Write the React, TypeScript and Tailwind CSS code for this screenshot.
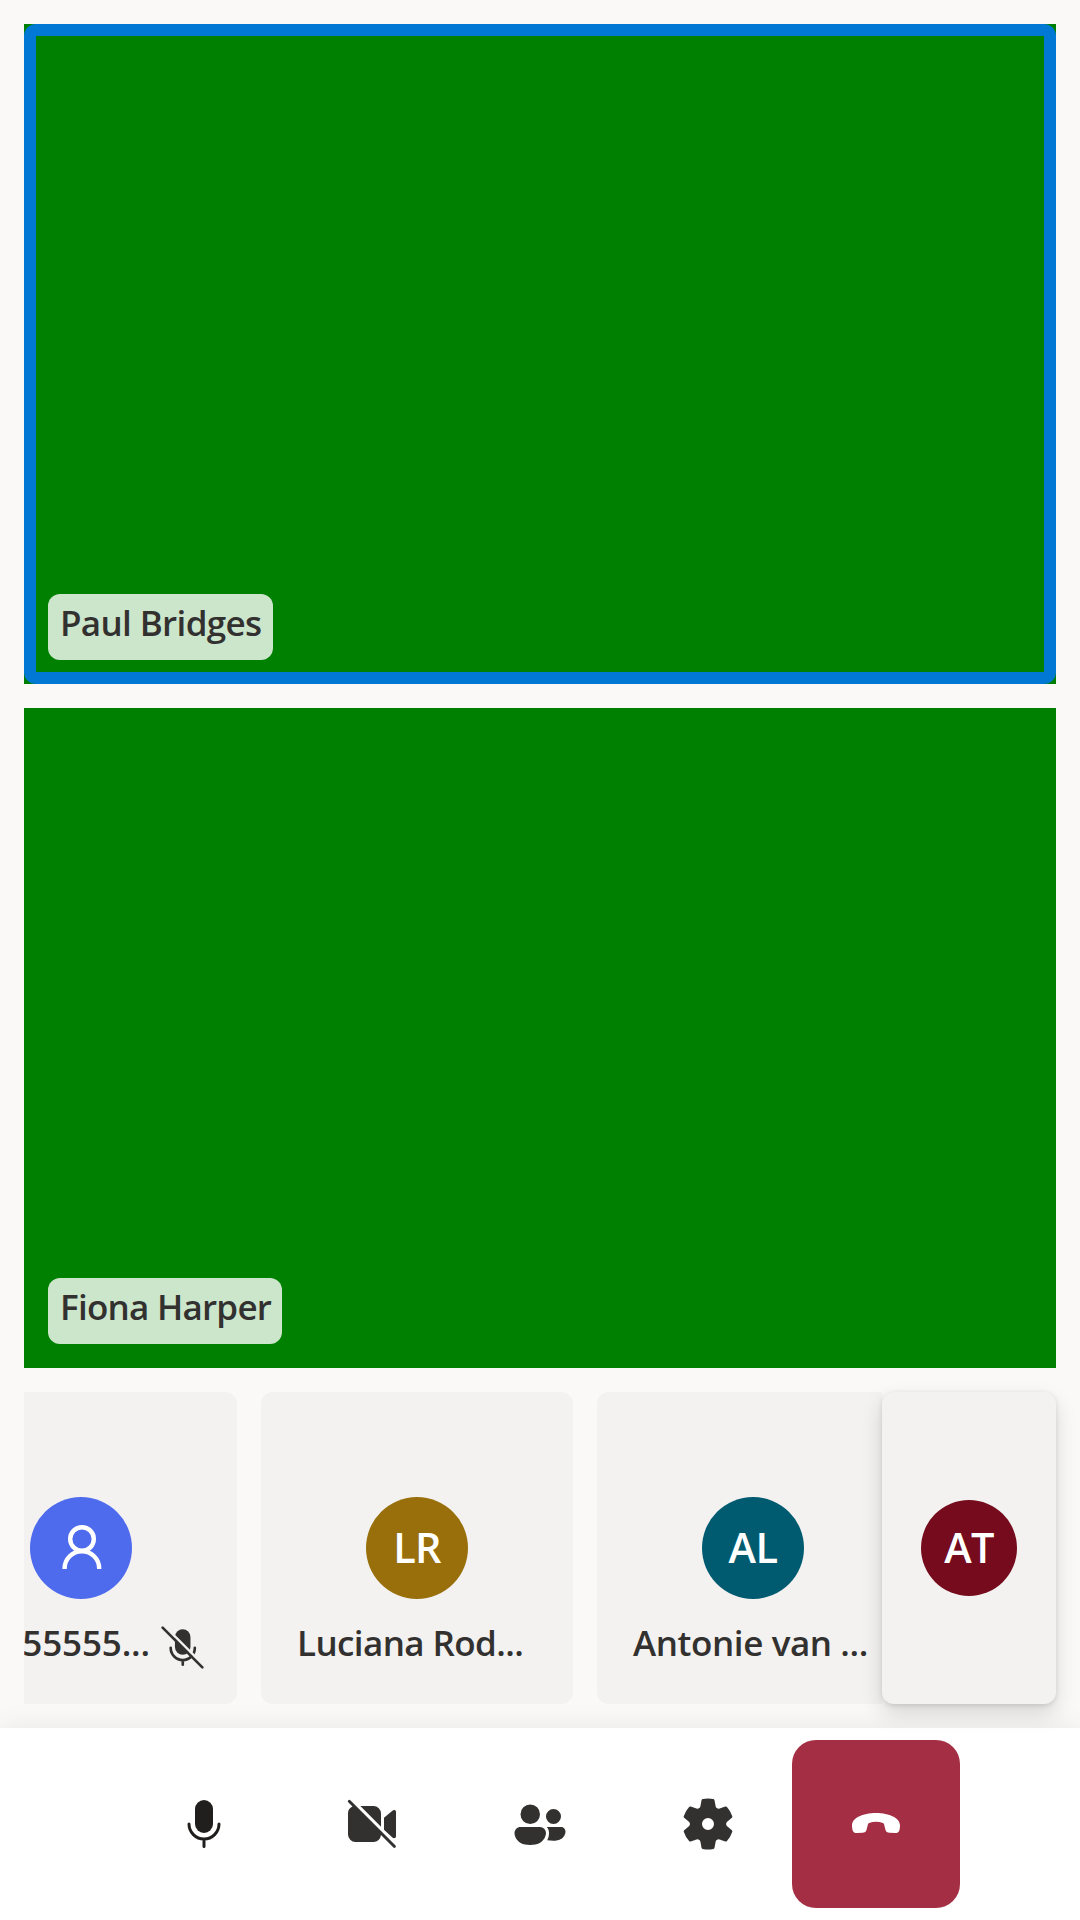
import React from 'react';

function MicIcon() {
  return (
    <svg className="size-[60px]" viewBox="0 0 20 20" fill="none" stroke="#201f1e" strokeLinecap="round">
      <rect x="7" y="2" width="6" height="11" rx="3" fill="#201f1e" stroke="none" />
      <path d="M5 10a5 5 0 0 0 10 0M10 15v2.5" />
    </svg>
  );
}

function VideoOffIcon() {
  return (
    <svg className="size-[60px]" viewBox="0 0 20 20" fill="#323130">
      <path d="M2.85 2.15a.5.5 0 1 0-.7.7L3.5 4.2A2.5 2.5 0 0 0 2 6.5v7A2.5 2.5 0 0 0 4.5 16h6a2.5 2.5 0 0 0 2.49-2.3l4.16 4.15a.5.5 0 0 0 .7-.7l-15-15ZM13 10.88 6.12 4h4.38A2.5 2.5 0 0 1 13 6.5v4.38ZM14 7.95v3.93l2.8 2.6c.45.4 1.2.3 1.2-.4V6c0-.75-.75-.8-1.2-.4L14 7.95Z" />
    </svg>
  );
}

function PeopleIcon() {
  return (
    <svg className="size-[60px]" viewBox="0 0 20 20" fill="#323130">
      <path d="M6.75 10a3.25 3.25 0 1 0 0-6.5 3.25 3.25 0 0 0 0 6.5ZM17 7.5a2.5 2.5 0 1 1-5 0 2.5 2.5 0 0 1 5 0ZM3.5 11c-1.1 0-2 .9-2 2 0 0 0 4 5.25 4S12 13 12 13a2 2 0 0 0-2-2H3.5ZM13 13c0 .9-.17 1.7-.6 2.4.6.1 1.3.15 2.1.15 4 0 4-3 4-3 0-.85-.7-1.55-1.5-1.55h-4.75c.5.55.75 1.2.75 2Z" />
    </svg>
  );
}

function SettingsIcon() {
  return (
    <svg className="size-[60px]" viewBox="0 0 20 20" fill="#323130">
      <path d="M1.91 7.38A8.5 8.5 0 0 1 3.7 4.3a.5.5 0 0 1 .54-.13l1.92.68a1 1 0 0 0 1.32-.76l.36-2a.5.5 0 0 1 .4-.4 8.53 8.53 0 0 1 3.55 0c.2.04.35.2.38.4l.37 2a1 1 0 0 0 1.32.76l1.92-.68a.5.5 0 0 1 .54.13 8.5 8.5 0 0 1 1.78 3.08c.06.2 0 .4-.15.54l-1.56 1.32a1 1 0 0 0 0 1.52l1.56 1.32a.5.5 0 0 1 .15.54 8.5 8.5 0 0 1-1.78 3.08.5.5 0 0 1-.54.13l-1.92-.68a1 1 0 0 0-1.32.76l-.37 2a.5.5 0 0 1-.38.4 8.53 8.53 0 0 1-3.56 0 .5.5 0 0 1-.39-.4l-.36-2a1 1 0 0 0-1.32-.76l-1.92.68a.5.5 0 0 1-.54-.13 8.5 8.5 0 0 1-1.78-3.08.5.5 0 0 1 .15-.54l1.56-1.32a1 1 0 0 0 0-1.52L2.06 7.92a.5.5 0 0 1-.15-.54ZM8 10a2 2 0 1 0 4 0 2 2 0 0 0-4 0Z" />
    </svg>
  );
}

function HangUpIcon() {
  return (
    <svg className="size-[60px]" viewBox="0 0 20 20" fill="#ffffff">
      <path d="M10 6.33c4.5 0 8 1.7 8 4.1 0 .5-.03.95-.15 1.45-.18.8-.7 1.2-1.5 1.15l-1.85-.12c-.75-.05-1.2-.4-1.37-1.1l-.45-1.75c-.05-.22-.15-.35-.38-.42a7.3 7.3 0 0 0-4.6 0c-.23.07-.33.2-.38.42l-.45 1.75c-.17.7-.62 1.05-1.37 1.1l-1.85.12c-.8.05-1.32-.35-1.5-1.15A6 6 0 0 1 2 10.43c0-2.4 3.5-4.1 8-4.1Z" />
    </svg>
  );
}

function MicOffIcon() {
  return (
    <svg className="size-[53px] shrink-0" viewBox="0 0 20 20" fill="none" stroke="#323130" strokeLinecap="round">
      <mask id="slash-gap" maskUnits="userSpaceOnUse" x="0" y="0" width="20" height="20">
        <rect width="20" height="20" fill="#fff" stroke="none" />
        <path d="m1.65.35 18 18" stroke="#000" strokeWidth="0.95" />
      </mask>
      <g mask="url(#slash-gap)">
        <rect x="7.15" y="3.1" width="5.85" height="9.6" rx="2.92" fill="#323130" stroke="none" />
        <path d="M5.55 10.1v.1a4.55 4.55 0 0 0 9.1 0v-.1M10.1 15v1.5" />
      </g>
      <path d="m2.5 2.5 15 15" />
    </svg>
  );
}

function PersonIcon() {
  return (
    <svg className="size-full" viewBox="0 0 102 102" fill="none" stroke="#fff" strokeWidth="4.4">
      <circle cx="52" cy="42" r="11.8" />
      <path d="M34.6 72v-.5a17.3 17.3 0 0 1 34.6 0v.5" />
    </svg>
  );
}

function VideoTile({ name, nameClass, speaking = false }: { name: string; nameClass: string; speaking?: boolean }) {
  return (
    <section className="relative flex h-[660px] items-end bg-[#008000] p-6">
      {speaking && <div className="absolute inset-0 rounded-[12px] border-[12px] border-[#0078d4]" />}
      <div className={`relative h-[66px] rounded-[12px] bg-white/80 px-3 text-[35px] leading-[57px] font-semibold whitespace-nowrap ${nameClass}`}>
        {name}
      </div>
    </section>
  );
}

function ParticipantTile({ avatarClass, avatar, children }: { avatarClass: string; avatar: React.ReactNode; children: React.ReactNode }) {
  return (
    <div className="flex h-[312px] w-[312px] shrink-0 flex-col items-center rounded-[12px] bg-[#f3f2f1] pt-[105px]">
      <div className={`flex size-[102px] items-center justify-center rounded-full text-[41.5px] leading-[60px] font-semibold text-white ${avatarClass}`}>
        {avatar}
      </div>
      <div className="mt-[18px] flex h-[52px] w-full items-center pl-9 text-[35px] leading-[52px] font-semibold whitespace-nowrap">
        {children}
      </div>
    </div>
  );
}

function ControlButton({ label, className = '', children }: { label: string; className?: string; children: React.ReactNode }) {
  return (
    <button aria-label={label} className={`flex size-[168px] items-center justify-center ${className}`}>
      {children}
    </button>
  );
}

export default function App() {
  return (
    <div className="flex h-[1920px] w-[1080px] flex-col overflow-hidden bg-[#faf9f8] font-['Open_Sans',sans-serif] text-[#323130]">
      <main className="flex flex-col gap-6 p-6">
        <VideoTile name="Paul Bridges" nameClass="w-[225px] tracking-[-0.65px]" speaking />
        <VideoTile name="Fiona Harper" nameClass="w-[234px] tracking-[-0.75px]" />
        <div className="flex h-[312px]">
          <div className="flex w-[858px] justify-end overflow-hidden">
            <div className="mr-[-27px] flex shrink-0 gap-6">
              <ParticipantTile avatarClass="bg-[#4f6bed]" avatar={<PersonIcon />}>
                <span className="flex w-[189px] shrink-0 justify-end tracking-[-0.15px]">15555555...</span>
                <span className="ml-[6px] flex pt-[8px]">
                  <MicOffIcon />
                </span>
              </ParticipantTile>
              <ParticipantTile avatarClass="bg-[#986f0b]" avatar={<span className="pb-[2px] tracking-[-0.9px]">LR</span>}>
                <span className="tracking-[-0.6px]">Luciana Rod...</span>
              </ParticipantTile>
              <ParticipantTile avatarClass="bg-[#005b70]" avatar={<span className="pb-[2px] tracking-[-0.6px]">AL</span>}>
                <span className="tracking-[-0.4px]">Antonie van ...</span>
              </ParticipantTile>
            </div>
          </div>
          <div className="relative z-10 flex w-[174px] items-center justify-center rounded-[12px] bg-[#f3f2f1] shadow-[0_9.6px_21.6px_rgba(0,0,0,0.132),0_1.8px_5.4px_rgba(0,0,0,0.108)]">
            <div className="flex size-24 items-center justify-center rounded-full bg-[#750b1c] text-[41.5px] leading-[60px] font-semibold text-white">
              <span className="pb-[2px] tracking-[-0.6px]">AT</span>
            </div>
          </div>
        </div>
      </main>
      <footer className="flex h-[192px] items-center justify-center bg-white shadow-[0_0_27px_rgba(0,0,0,0.08)]">
        <ControlButton label="Mute">
          <MicIcon />
        </ControlButton>
        <ControlButton label="Turn camera on">
          <VideoOffIcon />
        </ControlButton>
        <ControlButton label="People">
          <PeopleIcon />
        </ControlButton>
        <ControlButton label="Settings">
          <SettingsIcon />
        </ControlButton>
        <ControlButton label="Leave call" className="rounded-[24px] bg-[#a42e43]">
          <HangUpIcon />
        </ControlButton>
      </footer>
    </div>
  );
}
